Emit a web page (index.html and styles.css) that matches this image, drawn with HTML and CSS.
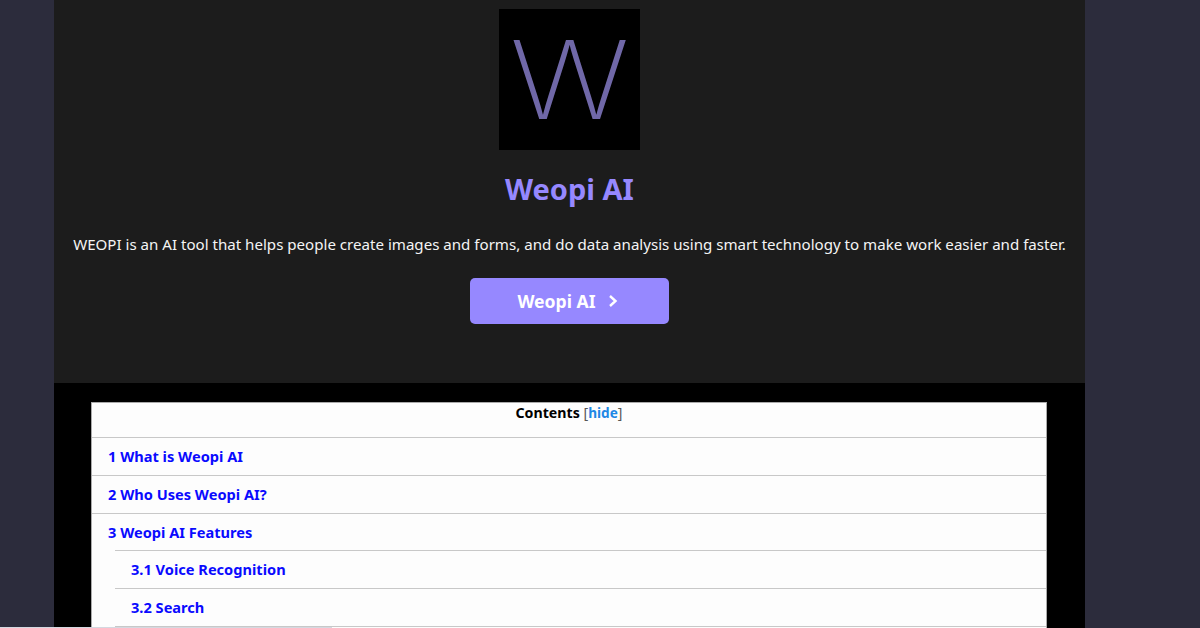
FILE: index.html
```html
<!DOCTYPE html>
<html lang="en">

<head>
    <meta charset="UTF-8">
    <title>Weopi AI</title>
    <link rel="stylesheet" href="styles.css">
</head>

<body>
    <div class="page">
        <div class="hero">
            <div class="logo"><span>W</span></div>
            <h1>Weopi AI</h1>
            <p>WEOPI is an AI tool that helps people create images and forms, and do data analysis using smart technology to make work easier and faster.</p>
            <a class="btn" href="#">Weopi AI
                <svg width="10" height="14" viewBox="0 0 10 14">
                    <path d="M2 2 L7.500 7 L2 12" fill="none" stroke="#fff" stroke-width="2.400"/>
                </svg>
            </a>
        </div>
        <div class="content">
            <div class="toc">
                <div class="toc-title"><b>Contents</b> <span class="toggle">[<a href="#">hide</a>]</span></div>
                <ul>
                    <li><a href="#">1 What is Weopi AI</a></li>
                    <li><a href="#">2 Who Uses Weopi AI?</a></li>
                    <li><a href="#">3 Weopi AI Features</a>
                        <ul>
                            <li><a href="#">3.1 Voice Recognition</a></li>
                            <li><a href="#">3.2 Search</a></li>
                        </ul>
                    </li>
                </ul>
            </div>
        </div>
    </div>
    <div class="edge"></div>
</body>

</html>
```

FILE: styles.css
```css
html, body {
    height: 628px;
    overflow: hidden;
}

body {
    margin: 0;
    background-color: #2c2c3c;
    font-family: "Noto Sans", "Open Sans", sans-serif;
    position: relative;
}

.page {
    width: 1031px;
    margin-left: 54px;
}

.hero {
    height: 383px;
    background-color: #1c1c1c;
    display: flex;
    flex-direction: column;
    align-items: center;
    padding-top: 9px;
    box-sizing: border-box;
}

.logo {
    width: 141px;
    height: 141px;
    background-color: #000;
    color: #7068a8;
    font-family: Inter, sans-serif;
    font-size: 109px;
    font-weight: 230;
    line-height: 141px;
    text-align: center;
    overflow: hidden;
}

.logo span {
    display: inline-block;
    transform: scaleX(1.16);
}

h1 {
    margin: 20px 0 0;
    color: #9688ff;
    font-size: 29px;
    line-height: 38px;
    font-weight: 700;
}

.hero p {
    margin: 24px 0 0;
    color: #f4f4f4;
    font-size: 15.1px;
    line-height: 24px;
    white-space: nowrap;
}

.btn {
    margin-top: 22px;
    width: 199px;
    height: 46px;
    padding-right: 4px;
    box-sizing: border-box;
    display: flex;
    justify-content: center;
    align-items: center;
    gap: 12px;
    background-color: #9688ff;
    border-radius: 5px;
    color: #fff;
    font-size: 17.6px;
    font-weight: 700;
    text-decoration: none;
}

.content {
    background-color: #000;
    padding: 19px 38px 0 37px;
    height: 245px;
    box-sizing: border-box;
    overflow: hidden;
}

.toc {
    background-color: #fdfdfd;
    border: 1px solid #aaa;
    font-size: 14.6px;
    min-height: 300px;
}

.toc-title {
    height: 34px;
    text-align: center;
    color: #000;
    font-size: 14.2px;
    line-height: 20px;
}

.toggle {
    color: #555;
}

.toggle a {
    color: #1e88e5;
    font-size: 13.6px;
    font-weight: 700;
    text-decoration: none;
}

.toc ul {
    list-style: none;
    margin: 0;
    padding: 0;
}

.toc li a {
    display: block;
    height: 36.75px;
    line-height: 36px;
    padding-left: 16px;
    border-top: 1px solid #c8c8c8;
    color: #0a0aff;
    font-weight: 700;
    text-decoration: none;
}

.toc li ul {
    margin-left: 23px;
}

.toc li li:last-child a {
    border-bottom: 1px solid #c8c8c8;
}

/* thin light strip along the bottom left of the capture */
.edge {
    position: absolute;
    left: 0;
    bottom: 0;
    width: 332px;
    height: 1px;
    background-color: #d4d8e0;
}
```
